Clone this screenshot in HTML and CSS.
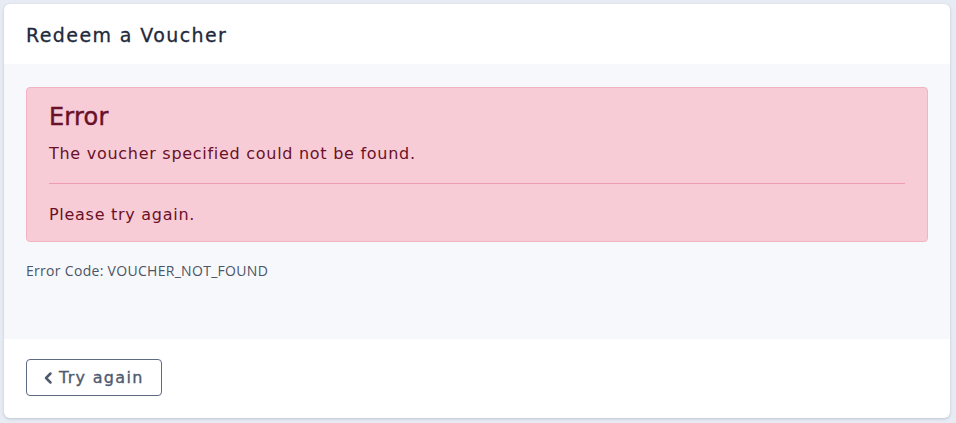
FILE: index.html
```html
<!DOCTYPE html>
<html>
<head>
<meta charset="utf-8">
<link rel="stylesheet" href="styles.css">
</head>
<body>
<div class="card">
  <div class="card-header">Redeem a Voucher</div>
  <div class="card-body">
    <div class="alert">
      <h4 class="alert-title">Error</h4>
      <p class="alert-text">The voucher specified could not be found.</p>
      <hr class="alert-rule">
      <p class="alert-text">Please try again.</p>
    </div>
    <div class="error-code">Error Code: VOUCHER_NOT_FOUND</div>
  </div>
  <div class="card-footer">
    <button class="btn">
      <svg class="chev" width="10" height="14" viewBox="0 0 10 14"><polyline points="7.5,2.5 3,7 7.5,11.5" fill="none" stroke="currentColor" stroke-width="2.5" stroke-linecap="round" stroke-linejoin="round"/></svg>
      <span>Try again</span>
    </button>
  </div>
</div>
</body>
</html>
```
FILE: styles.css
```css
* { box-sizing: border-box; }
html, body { margin: 0; }
body {
  background: #e7ecf4;
  padding: 4px 6px 5px 4px;
  font-family: "DejaVu Sans", sans-serif;
}
.card {
  background: #fff;
  border-radius: 6px;
  box-shadow: 0 1px 3px rgba(60, 72, 100, 0.25);
  overflow: hidden;
}
.card-header {
  height: 60px;
  display: flex;
  align-items: center;
  padding: 1px 22px 0;
  font-size: 19px;
  letter-spacing: 1.4px;
  color: #1f2a3c;
  -webkit-text-stroke: 0.3px #1f2a3c;
}
.card-body {
  background: #f7f8fc;
  padding: 23px 22px 0;
  height: 275px;
}
.alert {
  background: #f8ccd6;
  border: 1px solid #f4b3c1;
  border-radius: 4px;
  padding: 15px 22px 14px;
  color: #6a1029;
  height: 155px;
}
.alert-title {
  margin: 0 0 10px;
  font-size: 24px;
  font-weight: normal;
  line-height: 29px;
  letter-spacing: 0.2px;
  -webkit-text-stroke: 0.45px #6a1029;
}
.alert-text {
  margin: 0;
  font-size: 16px;
  line-height: 24px;
  letter-spacing: 0.72px;
}
.alert-rule {
  border: 0;
  border-top: 1px solid #ee9cb0;
  margin: 17px 0 19px;
}
.error-code {
  margin-top: 20px;
  font-family: "Open Sans", sans-serif;
  font-size: 14px;
  line-height: 18px;
  letter-spacing: 0.3px;
  color: #4b5565;
}
.card-footer {
  padding: 20px 22px;
  height: 79px;
}
.btn {
  display: inline-flex;
  align-items: center;
  gap: 6px;
  height: 37px;
  width: 136px;
  padding: 0 16px;
  background: #fff;
  border: 1px solid #5e6a82;
  border-radius: 4px;
  font-family: "DejaVu Sans", sans-serif;
  font-size: 16px;
  letter-spacing: 1.3px;
  color: #505a6e;
  -webkit-text-stroke: 0.35px #505a6e;
}
.chev { display: block; }
```
